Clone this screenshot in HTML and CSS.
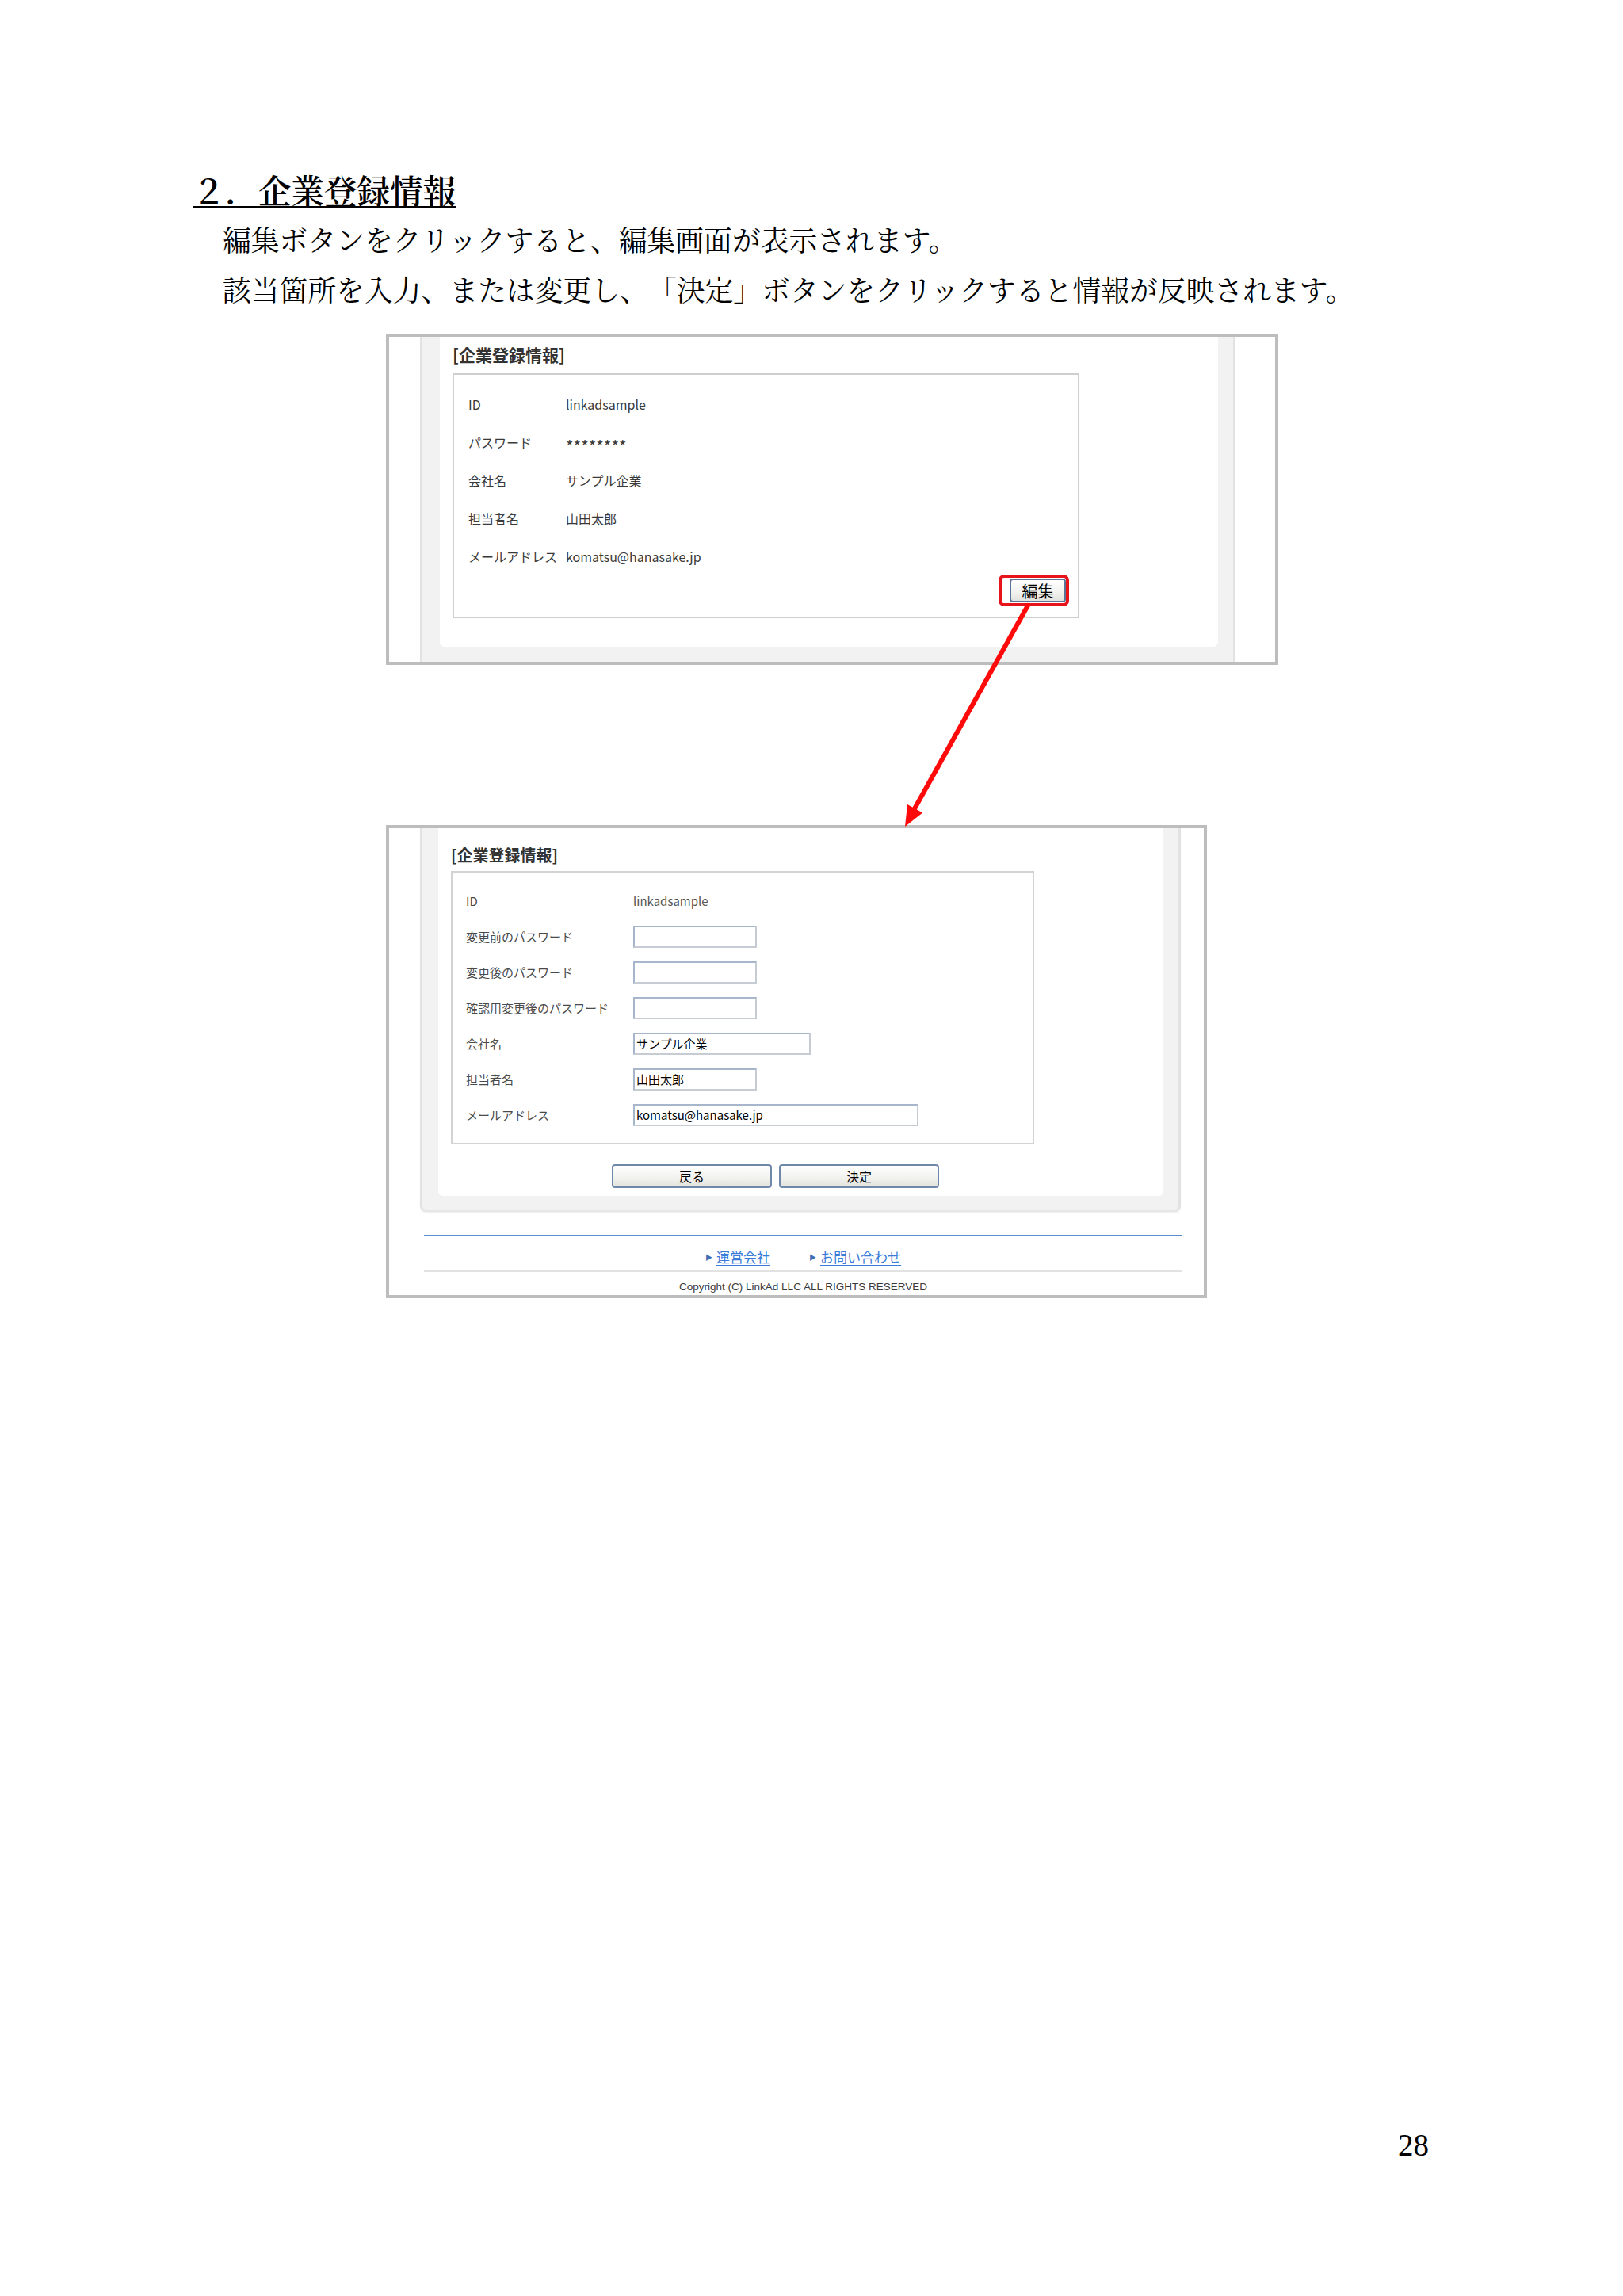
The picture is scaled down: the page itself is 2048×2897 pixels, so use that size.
FILE: index.html
```html
<!DOCTYPE html>
<html lang="ja">
<head>
<meta charset="utf-8">
<title>企業登録情報</title>
<link rel="stylesheet" href="styles.css">
</head>
<body>
<div class="page">
  <h2 class="heading">２．企業登録情報</h2>
  <div class="intro">
    <p>編集ボタンをクリックすると、編集画面が表示されます。</p>
    <p>該当箇所を入力、または変更し、「決定」ボタンをクリックすると情報が反映されます。</p>
  </div>

  <div class="shot shot1">
    <div class="wrap wrap1">
      <div class="panel panel1">
        <div class="ptitle t1">[企業登録情報]</div>
        <div class="infobox">
          <div class="row r1"><span class="lbl">ID</span><span class="val">linkadsample</span></div>
          <div class="row r1"><span class="lbl">パスワード</span><span class="val"><span class="mask">********</span></span></div>
          <div class="row r1"><span class="lbl">会社名</span><span class="val">サンプル企業</span></div>
          <div class="row r1"><span class="lbl">担当者名</span><span class="val">山田太郎</span></div>
          <div class="row r1"><span class="lbl">メールアドレス</span><span class="val">komatsu@hanasake.jp</span></div>
          <div class="edit-row"><span class="mark"><span class="btn btn-edit">編集</span></span></div>
        </div>
      </div>
    </div>
  </div>

  <div class="shot shot2">
    <div class="wrap wrap2">
      <div class="panel panel2">
        <div class="ptitle t2">[企業登録情報]</div>
        <div class="formbox">
          <div class="row r2"><span class="lbl">ID</span><span class="val">linkadsample</span></div>
          <div class="row r2"><span class="lbl">変更前のパスワード</span><span class="field w156"></span></div>
          <div class="row r2"><span class="lbl">変更後のパスワード</span><span class="field w156"></span></div>
          <div class="row r2"><span class="lbl">確認用変更後のパスワード</span><span class="field w156"></span></div>
          <div class="row r2"><span class="lbl">会社名</span><span class="field w224">サンプル企業</span></div>
          <div class="row r2"><span class="lbl">担当者名</span><span class="field w156">山田太郎</span></div>
          <div class="row r2"><span class="lbl">メールアドレス</span><span class="field w360">komatsu@hanasake.jp</span></div>
        </div>
        <div class="actions">
          <span class="btn btn-wide">戻る</span>
          <span class="btn btn-wide">決定</span>
        </div>
      </div>
    </div>
    <div class="footer">
      <div class="links">
        <span class="link"><span class="tri">&#9654;</span><span class="ltext">運営会社</span></span>
        <span class="link"><span class="tri">&#9654;</span><span class="ltext">お問い合わせ</span></span>
      </div>
      <div class="copy">Copyright (C) LinkAd LLC ALL RIGHTS RESERVED</div>
    </div>
  </div>

  <div class="pageno">28</div>

  <svg class="arrow" width="2048" height="1100" viewBox="0 0 2048 1100" aria-hidden="true">
    <line x1="1297" y1="764" x2="1152" y2="1024" stroke="#ff0a0a" stroke-width="6" stroke-linecap="round"/>
    <polygon points="1142,1043 1164.2,1025.6 1145,1015" fill="#ff0a0a"/>
  </svg>
</div>
</body>
</html>
```

FILE: styles.css
```css
html, body {
  margin: 0;
  padding: 0;
  background: #ffffff;
}

.page {
  position: relative;
  width: 2048px;
  height: 2897px;
  box-sizing: border-box;
  padding-top: 218px;
  font-family: "Noto Serif CJK JP", "Noto Sans CJK JP", serif;
  color: #000;
}

.heading {
  margin: 0 0 0 243px;
  width: fit-content;
  font-size: 41.5px;
  line-height: 42px;
  font-weight: 600;
  border-bottom: 3px solid #000;
  text-spacing-trim: space-all;
}

.intro {
  margin: 7px 0 0 281px;
  font-size: 35.8px;
  line-height: 63px;
  text-spacing-trim: space-all;
}

.intro p {
  margin: 0;
  white-space: nowrap;
}

/* screenshot frames */
.shot {
  margin-left: 487px;
  border: 4px solid #bdbdbd;
  background: #fff;
  box-sizing: border-box;
  font-family: "Noto Sans CJK JP", sans-serif;
}

.shot1 {
  margin-top: 25px;
  width: 1126px;
}

.shot2 {
  margin-top: 202px;
  width: 1036px;
}

.wrap {
  margin-left: 39px;
  box-sizing: border-box;
  background: #f2f2f2;
  border-left: 3px solid #e2e2e2;
  border-right: 3px solid #e2e2e2;
}

.wrap1 {
  width: 1029px;
  padding: 0 19px 19px 22px;
}

.wrap2 {
  width: 960px;
  padding: 0 19px 18px 20px;
  border-bottom: 2px solid #e6e6e6;
  border-radius: 0 0 8px 8px;
  box-shadow: 0 2px 2px rgba(0, 0, 0, 0.06);
}

.panel {
  background: #fff;
  border-radius: 0 0 6px 6px;
}

.panel1 {
  padding: 12px 0 36px 16px;
}

.panel2 {
  padding: 24px 0 10px 16px;
}

.ptitle {
  font-weight: 700;
  color: #333;
}

.t1 {
  font-size: 21px;
  line-height: 21px;
  margin-bottom: 13px;
}

.t2 {
  font-size: 20px;
  line-height: 20px;
  margin-bottom: 10px;
}

.infobox {
  width: 791px;
  box-sizing: border-box;
  border: 2px solid #cfcfcf;
  padding: 13px 0 13px 18px;
}

.formbox {
  width: 736px;
  box-sizing: border-box;
  border: 2px solid #d3d3d3;
  padding: 13px 0 13px 17px;
}

.row {
  display: grid;
  align-items: center;
}

.r1 {
  grid-template-columns: 123px 1fr;
  height: 48px;
  font-size: 16px;
  color: #3a3a3a;
}

.r2 {
  grid-template-columns: 211px 1fr;
  height: 45px;
  font-size: 15px;
  color: #4a4a4a;
}

.lbl, .val {
  white-space: nowrap;
}

.mask {
  position: relative;
  top: 4px;
  font-size: 20.5px;
}

.r2 .val {
  color: #555;
}

.edit-row {
  display: flex;
  justify-content: flex-end;
  margin-top: -1px;
  padding-right: 11px;
}

.mark {
  display: block;
  border: 4px solid #e8141b;
  border-radius: 7px;
  padding: 1px 0 0 10px;
  height: 31px;
}

.btn {
  display: flex;
  align-items: center;
  justify-content: center;
  box-sizing: border-box;
  border-radius: 4px;
  background: linear-gradient(#ffffff, #f1f1ee 60%, #e2e2df);
  color: #000;
  font-family: "Noto Sans CJK JP", sans-serif;
}

.btn-edit {
  width: 71px;
  height: 30px;
  border: 2px solid #5a7396;
  font-size: 20px;
}

.field {
  display: block;
  box-sizing: border-box;
  height: 28px;
  border: 2px solid;
  border-color: #a7b6cb #c6ccd3 #c6ccd3 #a7b6cb;
  padding: 0 2px;
  line-height: 24px;
  font-size: 15px;
  color: #000;
  white-space: nowrap;
}

.w156 { width: 156px; }
.w224 { width: 224px; }
.w360 { width: 360px; }

.actions {
  display: flex;
  gap: 9px;
  margin: 25px 0 0 203px;
}

.btn-wide {
  width: 202px;
  height: 30px;
  border: 2px solid #7189a9;
  font-size: 16px;
}

.footer {
  margin: 29px 0 0 44px;
  width: 957px;
  border-top: 2px solid #5b8fd3;
}

.links {
  display: flex;
  justify-content: center;
  gap: 49px;
  padding-top: 9px;
  height: 34px;
  line-height: 34px;
  border-bottom: 2px solid #e2e2e2;
}

.link {
  display: flex;
  align-items: center;
  gap: 5px;
}

.tri {
  font-size: 9px;
  color: #3f6fb4;
  line-height: 1;
}

.ltext {
  font-size: 17px;
  color: #3a7bd8;
  text-decoration: underline;
  text-underline-offset: 3px;
}

.copy {
  padding-top: 8px;
  height: 21px;
  line-height: 21px;
  text-align: center;
  font-family: "Liberation Sans", sans-serif;
  font-size: 13.5px;
  color: #3a3a3a;
}

.pageno {
  margin-top: 1049px;
  padding-left: 1764px;
  font-family: "Liberation Serif", serif;
  font-size: 39px;
  line-height: 39px;
}

.arrow {
  position: absolute;
  left: 0;
  top: 0;
  pointer-events: none;
  overflow: visible;
}
```
